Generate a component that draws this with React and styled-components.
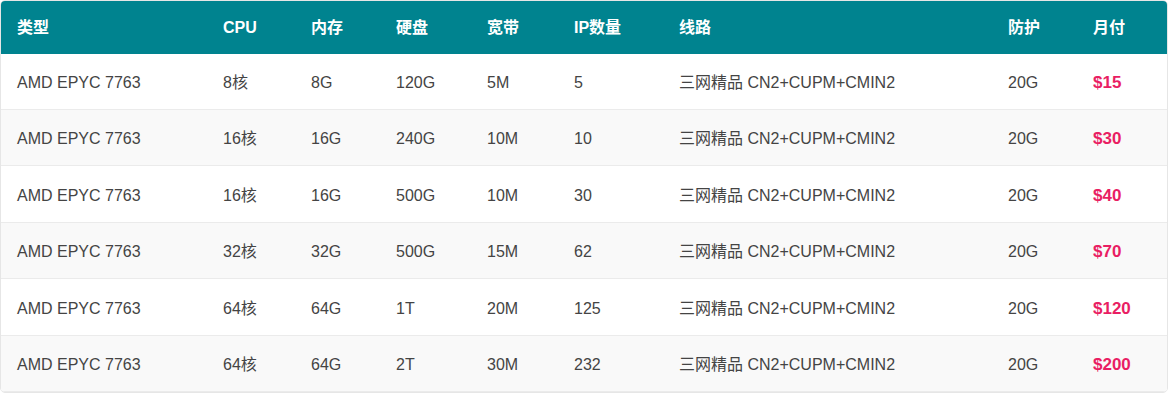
import React from "react";
import styled, { createGlobalStyle } from "styled-components";

const plans = [
  { cpu: "8核", ram: "8G", disk: "120G", bw: "5M", ip: "5", price: "$15" },
  { cpu: "16核", ram: "16G", disk: "240G", bw: "10M", ip: "10", price: "$30" },
  { cpu: "16核", ram: "16G", disk: "500G", bw: "10M", ip: "30", price: "$40" },
  { cpu: "32核", ram: "32G", disk: "500G", bw: "15M", ip: "62", price: "$70" },
  { cpu: "64核", ram: "64G", disk: "1T", bw: "20M", ip: "125", price: "$120" },
  { cpu: "64核", ram: "64G", disk: "2T", bw: "30M", ip: "232", price: "$200" },
];

const columns = [
  { title: "类型", width: 206 },
  { title: "CPU", width: 88 },
  { title: "内存", width: 85 },
  { title: "硬盘", width: 91 },
  { title: "宽带", width: 87 },
  { title: "IP数量", width: 105 },
  { title: "线路", width: 329 },
  { title: "防护", width: 85 },
  { title: "月付", width: 90 },
];

const Global = createGlobalStyle`
  body {
    margin: 0;
    background: #fff;
    font-family: "Liberation Sans", Arial, "Noto Sans CJK SC", sans-serif;
  }
`;

const Wrap = styled.div`
  border: 1px solid #e6e6e6;
  border-radius: 5px;
  overflow: hidden;
`;

const Table = styled.table`
  width: 100%;
  border-collapse: collapse;
  table-layout: fixed;
  font-size: 16px;
`;

const Head = styled.th`
  background: #00838f;
  color: #fff;
  font-weight: bold;
  text-align: left;
  padding: 15.5px 16px 16px;
  line-height: 21px;
`;

const Row = styled.tr`
  background: ${(p) => (p.$odd ? "#f9f9f9" : "#fff")};
  border-bottom: 1px solid #ebebeb;
`;

const Cell = styled.td`
  color: #444;
  padding: 18.5px 16px 15.5px;
  line-height: 21.4px;
  white-space: nowrap;
`;

const Price = styled(Cell)`
  color: #e91e63;
  font-weight: bold;
  font-size: 17px;
`;

export default function App() {
  return (
    <>
      <Global />
      <Wrap>
        <Table>
          <colgroup>
            {columns.map((c) => (
              <col key={c.title} style={{ width: c.width }} />
            ))}
          </colgroup>
          <thead>
            <tr>
              {columns.map((c) => (
                <Head key={c.title}>{c.title}</Head>
              ))}
            </tr>
          </thead>
          <tbody>
            {plans.map((p, i) => (
              <Row key={i} $odd={i % 2 === 1}>
                <Cell>AMD EPYC 7763</Cell>
                <Cell>{p.cpu}</Cell>
                <Cell>{p.ram}</Cell>
                <Cell>{p.disk}</Cell>
                <Cell>{p.bw}</Cell>
                <Cell>{p.ip}</Cell>
                <Cell>三网精品 CN2+CUPM+CMIN2</Cell>
                <Cell>20G</Cell>
                <Price>{p.price}</Price>
              </Row>
            ))}
          </tbody>
        </Table>
      </Wrap>
    </>
  );
}
